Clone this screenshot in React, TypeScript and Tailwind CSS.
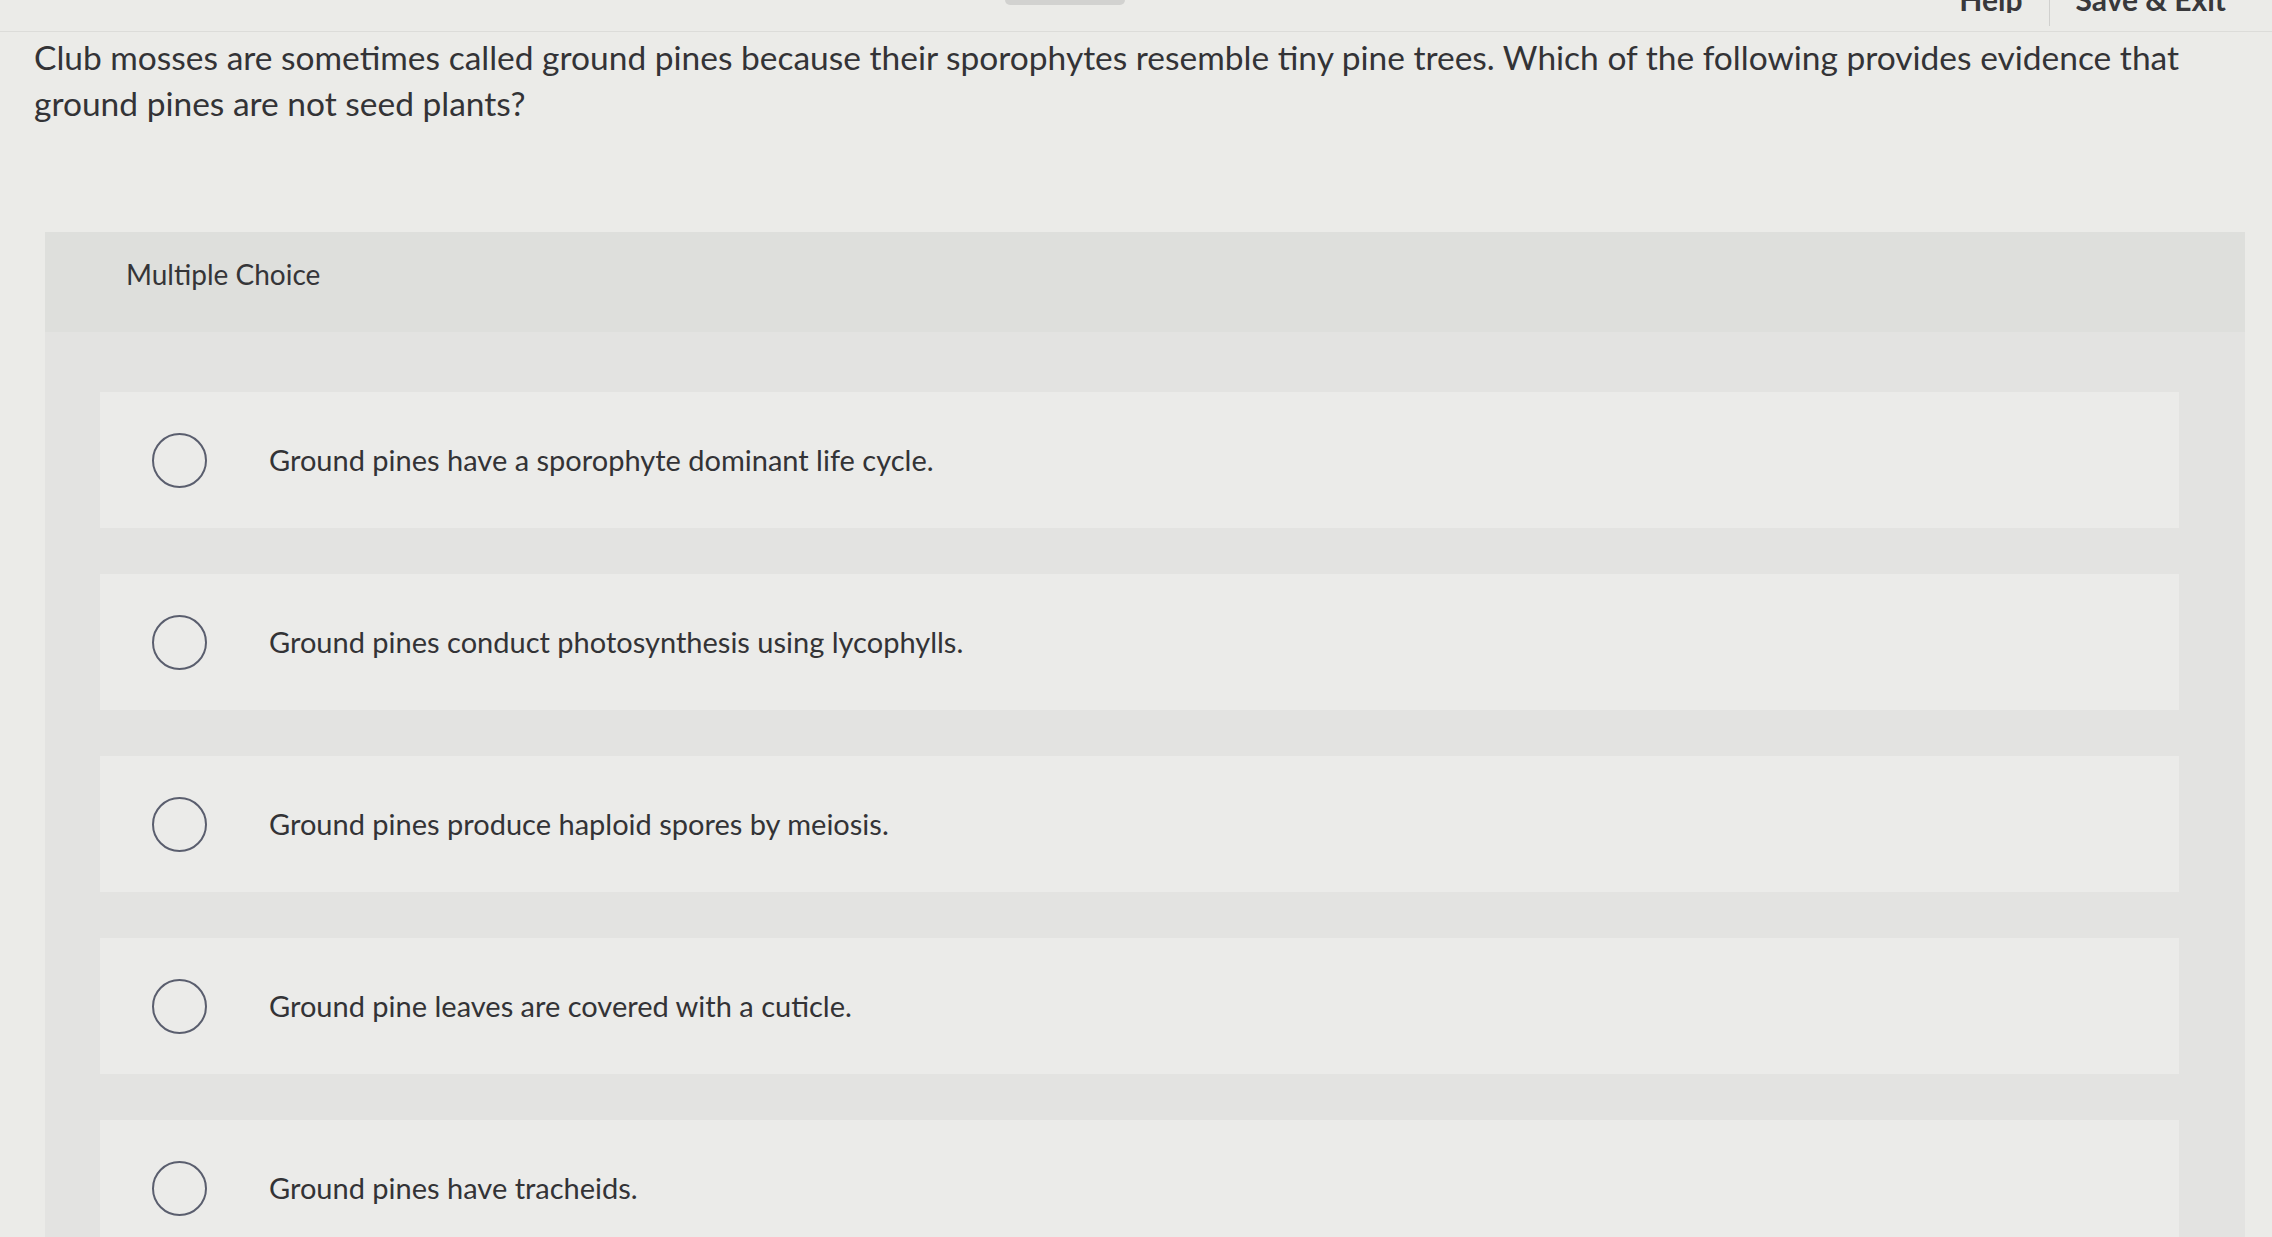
import React from "react";

const options = [
  "Ground pines have a sporophyte dominant life cycle.",
  "Ground pines conduct photosynthesis using lycophylls.",
  "Ground pines produce haploid spores by meiosis.",
  "Ground pine leaves are covered with a cuticle.",
  "Ground pines have tracheids.",
];

export default function App() {
  return (
    <div
      className="relative w-full h-[1237px] overflow-hidden bg-[#ebebe8] text-[#333336]"
      style={{ fontFamily: "Lato, 'Liberation Sans', sans-serif" }}
    >
      {/* top bar */}
      <div className="relative h-[32px] border-b border-[#dcdcd9]">
        <div className="absolute left-[1005px] top-0 h-[5px] w-[120px] rounded-b-[6px] bg-[#d2d2d0]" />
        <div className="flex h-[26px] justify-end pr-[46px]">
          <div className="h-[13px] overflow-hidden">
            <div className="mt-[-16px] text-[30px] font-bold leading-[30px] text-[#38383b]">Help</div>
          </div>
          <div className="ml-[26px] mr-[26px] h-[26px] w-px bg-[#d0d0ce]" />
          <div className="h-[13px] overflow-hidden">
            <div className="mt-[-16px] text-[30px] font-bold leading-[30px] text-[#38383b]">Save &amp; Exit</div>
          </div>
        </div>
      </div>

      {/* question */}
      <div className="pl-[34px] pt-[2px] text-[33.5px] leading-[46px] text-[#333336]">
        Club mosses are sometimes called ground pines because their sporophytes resemble tiny pine trees. Which of the following provides evidence that
        <br />
        ground pines are not seed plants?
      </div>

      {/* panel */}
      <div className="ml-[45px] mt-[106px] w-[2200px] bg-[#e3e3e1] pb-[40px]">
        <div className="h-[100px] bg-[#dedfdc] pl-[81px] pt-[25px] text-[28px] leading-[34px] text-[#353538]">
          Multiple Choice
        </div>
        <div className="flex flex-col gap-[46px] pl-[55px] pr-[66px] pt-[60px]">
          {options.map((t) => (
            <div key={t} className="flex h-[136px] items-center bg-[#ebebe9] pl-[52px]">
              <div className="h-[55px] w-[55px] shrink-0 rounded-full border-[2.5px] border-[#5a5e6e]" />
              <div className="ml-[62px] text-[29px] leading-[34px] text-[#333336]">{t}</div>
            </div>
          ))}
        </div>
      </div>
    </div>
  );
}
